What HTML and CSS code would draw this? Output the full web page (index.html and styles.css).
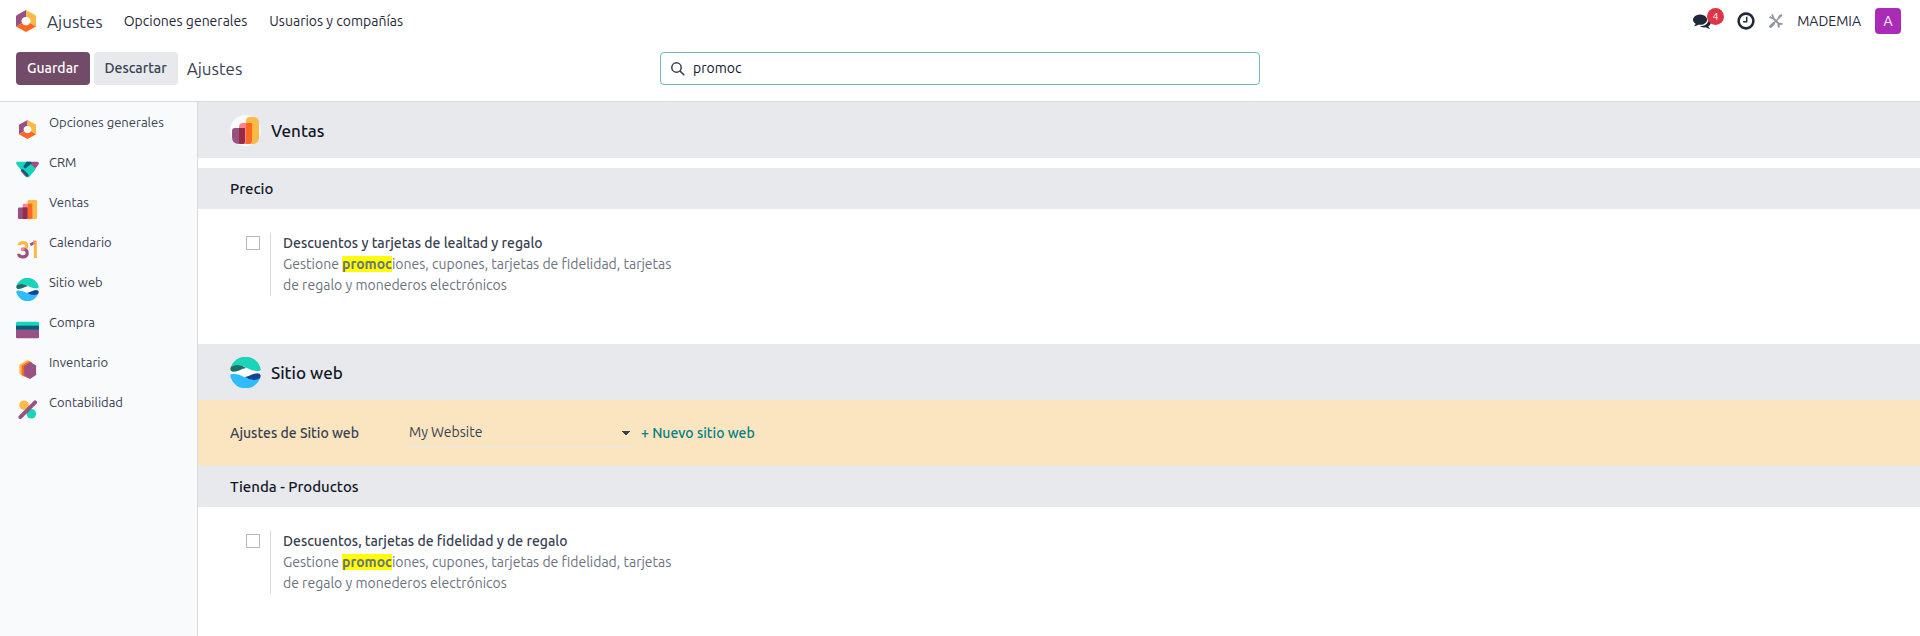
FILE: index.html
```html
<!DOCTYPE html>
<html lang="es">
<head>
    <meta charset="UTF-8">
    <meta name="viewport" content="width=device-width, initial-scale=1.0">
    <title>Ajustes</title>
    <link rel="stylesheet" href="styles.css">
</head>
<body>
    <!-- icons used more than once -->
    <svg class="defs" aria-hidden="true">
        <symbol id="ico-ajustes" viewBox="0 0 20 22">
            <path d="M10 0v7a4 4 0 0 0-4 6l-6 3.500V6.500q0-1 1-1.500z" fill="#985184"/>
            <path d="M10 0l9 5q1 .5 1 1.500v10L14 13a4 4 0 0 0-4-6z" fill="#fbb945"/>
            <path d="M0 16.500L6 13a4.500 4.500 0 0 0 8 0l6 3.500L10 22z" fill="#fc6722"/>
        </symbol>
        <symbol id="ico-web" viewBox="0 0 24 24">
            <circle cx="12" cy="12" r="11.500" fill="#fff"/>
            <path d="M.6 8A12 12 0 0 1 23.400 8q1.200 3-1.800 3-4 0-8.600-2.500Q8 5 .6 8z" fill="#1ad3bb"/>
            <path d="M.8 7.500Q7 4.500 12.500 8.500q-2 .3-5.500 1.900Q1 12.800 .3 9.800 .2 8.500 .8 7.500z" fill="#1a6f66"/>
            <path d="M23.400 16A12 12 0 0 1 .6 16q-1.200-3 1.800-3 4 0 8.600 2.500 5 3.500 12.400.5z" fill="#2ebcfa"/>
            <path d="M23.200 16.500q-6.200 3-11.700-1 2-.3 5.500-1.900 6-2.400 6.700.6.100 1.300-.5 2.300z" fill="#144496"/>
        </symbol>
    </svg>

    <header class="navbar">
        <a class="brand" href="#">
            <svg class="brand-icon"><use href="#ico-ajustes"/></svg>
            <span>Ajustes</span>
        </a>
        <nav class="menu">
            <a href="#">Opciones generales</a>
            <a href="#">Usuarios y compañías</a>
        </nav>
        <div class="systray">
            <button class="tray-btn chat" type="button" aria-label="Conversaciones">
                <svg width="18" height="18" viewBox="0 0 1792 1792" fill="#1f2937"><path d="M1408 768q0 139-94 257t-256.500 186.500-353.500 68.500q-86 0-176-16-124 88-278 128-36 9-86 16h-3q-11 0-20.500-8t-11.500-21q-1-3-1-6.500t.5-6.500 2-6l2.500-5 3.500-5.500 4-5 4.500-5 4-4.500q5-6 23-25t26-29.500 22.500-29 25-38.500 20.500-44q-124-72-195-177t-71-224q0-139 94-257t256.500-186.500 353.500-68.500 353.500 68.500 256.500 186.500 94 257zm384 256q0 120-71 224.500t-195 176.500q10 24 20.500 44t25 38.500 22.500 29 26 29.500 23 25q1 1 4 4.500t4.500 5 4 5 3.500 5.500l2.500 5 2 6 .5 6.500-1 6.500q-3 14-13 22t-22 7q-50-7-86-16-154-40-278-128-90 16-176 16-271 0-472-132 58 4 88 4 161 0 309-45t264-129q125-92 192-212t67-254q0-77-23-152 129 71 204 178t75 230z"/></svg>
                <span class="badge">4</span>
            </button>
            <button class="tray-btn" type="button" aria-label="Actividades">
                <svg width="18" height="18" viewBox="96 96 1600 1600" fill="#1f2937"><path d="M1024 544v448q0 14-9 23t-23 9h-320q-14 0-23-9t-9-23v-64q0-14 9-23t23-9h224v-352q0-14 9-23t23-9h64q14 0 23 9t9 23zm416 352q0-148-73-273t-198-198-273-73-273 73-198 198-73 273 73 273 198 198 273 73 273-73 198-198 73-273zm224 0q0 209-103 385.500t-279.500 279.500-385.500 103-385.500-103-279.500-279.500-103-385.500 103-385.500 279.500-279.500 385.500-103 385.500 103 279.500 279.500 103 385.500z"/></svg>
            </button>
            <button class="tray-btn" type="button" aria-label="Herramientas">
                <svg width="14" height="14" viewBox="0 0 14 14" fill="none" stroke="#8f939b">
                    <path d="M3.500 3.500l7.500 7.500" stroke-width="1.800"/>
                    <path d="M.5 2.800Q2.500 4.500 3.600 3.600T2.800 .5" stroke-width="1.800"/>
                    <path d="M10.200 13.500Q8.800 11 10 10t3.500.3" stroke-width="1.800"/>
                    <path d="M1.600 12.400l3-3" stroke-width="2.800" stroke-linecap="round"/>
                    <path d="M4.500 9.500l5-5" stroke-width="1.400"/>
                    <path d="M9.500 4.500l1.300-2.300 2.200-1.200" stroke-width="2.200"/>
                </svg>
            </button>
            <span class="company">MADEMIA</span>
            <button class="avatar" type="button">A</button>
        </div>
    </header>

    <div class="control-panel">
        <div class="actions">
            <button class="btn btn-primary" type="button">Guardar</button>
            <button class="btn btn-secondary" type="button">Descartar</button>
            <span class="page-name">Ajustes</span>
        </div>
        <label class="search">
            <svg width="14" height="14" viewBox="0 0 14 14" fill="none" stroke="#374151" stroke-width="1.500"><circle cx="5.500" cy="5.500" r="4.700"/><path d="M8.900 8.900l4.400 4.400"/></svg>
            <input type="text" value="promoc" aria-label="Buscar">
        </label>
    </div>

    <div class="settings">
        <aside class="sidebar">
            <a class="tab" href="#"><svg viewBox="0 0 24 24"><use href="#ico-ajustes" x="3" y="2" width="18" height="20"/></svg>Opciones generales</a>
            <a class="tab" href="#">
                <svg viewBox="0 0 24 24">
                    <path d="M11 4h11.500q2 .5 1 2.500L20 11.500q-1 1-2 0z" fill="#985184"/>
                    <path d="M1.500 4H12l7.500 6q1.500 1.500 0 3L14 19.500q-1.500 1.500-3 0L.8 7Q-.8 4.300 1.500 4z" fill="#1ad3bb"/>
                    <path d="M11 4h4.500l1 1.500-6 5q-1 .8-2.200-.2-1.300-1.300 0-2.600z" fill="#005e7a"/>
                    <path d="M5.200 12.200q1.500-1.200 2.800 0l4.800 4.800q.8 1-.2 2l-1 1-5.800-5.800q-1.200-1-.6-2z" fill="#005e7a"/>
                    <path d="M5 12.300l6.500 7.700q-2-.2-5.200-4.600Q4.600 13.500 5 12.300z" fill="#985184"/>
                </svg>CRM</a>
            <a class="tab" href="#">
                <svg viewBox="0 0 24 24">
                    <rect x="12" y="2" width="10" height="20" rx="1.500" fill="#fbb945"/>
                    <path d="M7 7.500q0-1.500 1.500-1.500H17v14.500q0 1.500-1.500 1.500H7z" fill="#fc868b"/>
                    <path d="M12.500 6H17v14.500q0 1.500-1.500 1.500h-3z" fill="#fc6722"/>
                    <path d="M2 11.500Q2 10 3.500 10H12v10.500q0 1.500-1.500 1.500h-7Q2 22 2 20.500z" fill="#985184"/>
                    <path d="M7 10h5v10.500q0 1.500-1.500 1.500H7z" fill="#962b48"/>
                </svg>Ventas</a>
            <a class="tab" href="#">
                <svg viewBox="0 0 24 24" fill="none" stroke-width="3.200">
                    <path d="M3.200 7.500Q4 4.800 7.300 4.800q4 0 4 3.200t-4 3.600" stroke="#fbb945"/>
                    <path d="M5.500 11.800h1.800q4.400.2 4.400 3.900 0 4-4.400 4T2.800 16.500" stroke="#985184"/>
                    <path d="M5.500 11.600h3.500" stroke="#fc868b" stroke-width="2.800"/>
                    <path d="M20.200 3.300V21" stroke="#fbb945"/>
                    <path d="M15 7.300l4-2.600" stroke="#985184" stroke-width="2.800"/>
                    <path d="M18.600 6.300V3.300h2.400" stroke="#fc868b" stroke-width="1.500"/>
                </svg>Calendario</a>
            <a class="tab" href="#"><svg viewBox="0 0 24 24"><use href="#ico-web" width="24" height="24"/></svg>Sitio web</a>
            <a class="tab" href="#">
                <svg viewBox="0 0 24 24">
                    <path d="M0 9h24v11q0 1-1 1H1q-1 0-1-1z" fill="#985184"/>
                    <path d="M0 5.500Q0 4 1.500 4h21Q24 4 24 5.500V9H0z" fill="#1ad3bb"/>
                    <path d="M0 8h24v4H0z" fill="#005e7a"/>
                </svg>Compra</a>
            <a class="tab" href="#">
                <svg viewBox="0 0 24 24">
                    <path d="M12 2l2 1v17l-2 1-8.500-4.500V7z" fill="#fbb945"/>
                    <path d="M14 3l3 2v15l-3 1.500L6 18V8z" fill="#fc6722"/>
                    <path d="M15 4.500l6 3.300v10L14.500 21.800 8.500 18V8.500z" fill="#985184"/>
                </svg>Inventario</a>
            <a class="tab" href="#">
                <svg viewBox="0 0 24 24">
                    <circle cx="8.500" cy="7.500" r="5" fill="#fbb945"/>
                    <circle cx="16" cy="16.500" r="5" fill="#1ad3bb"/>
                    <path d="M4.500 20L20 4.500" stroke="#985184" stroke-width="4" stroke-linecap="round"/>
                </svg>Contabilidad</a>
        </aside>

        <main class="content">
            <section class="app">
                <h2 class="app-title">
                    <svg viewBox="0 0 31 31">
                        <circle cx="15.500" cy="15.500" r="15.500" fill="#f9fafb"/>
                        <path d="M16 6q0-4 4-4h3q6 0 6 6v14q0 7-7 7h-6z" fill="#fbb945"/>
                        <path d="M9 12q0-4 4-4h9v17q0 4-4 4H9z" fill="#fc868b"/>
                        <path d="M16 8h6v17q0 4-4 4h-2z" fill="#fc6722"/>
                        <path d="M2 16q0-3 3-3h10v13q0 3-3 3H9q-7 0-7-7z" fill="#985184"/>
                        <path d="M9 13h6v13q0 3-3 3-2 0-3-1z" fill="#962b48"/>
                    </svg>
                    Ventas
                </h2>
                <h3 class="block-title spaced">Precio</h3>
                <div class="setting">
                    <input type="checkbox" id="lealtad">
                    <div class="setting-text">
                        <label for="lealtad">Descuentos y tarjetas de lealtad y regalo</label>
                        <p>Gestione <mark>promoc</mark>iones, cupones, tarjetas de fidelidad, tarjetas <br>de regalo y monederos electrónicos</p>
                    </div>
                </div>
            </section>

            <section class="app">
                <h2 class="app-title">
                    <svg viewBox="0 0 30 30"><use href="#ico-web" width="30" height="30"/></svg>
                    Sitio web
                </h2>
                <div class="site-row">
                    <label for="website">Ajustes de Sitio web</label>
                    <select id="website">
                        <option>My Website</option>
                    </select>
                    <a href="#">+ Nuevo sitio web</a>
                </div>
                <h3 class="block-title">Tienda - Productos</h3>
                <div class="setting">
                    <input type="checkbox" id="fidelidad">
                    <div class="setting-text">
                        <label for="fidelidad">Descuentos, tarjetas de fidelidad y de regalo</label>
                        <p>Gestione <mark>promoc</mark>iones, cupones, tarjetas de fidelidad, tarjetas <br>de regalo y monederos electrónicos</p>
                    </div>
                </div>
            </section>
        </main>
    </div>
</body>
</html>
```

FILE: styles.css
```css
*{ box-sizing: border-box; margin: 0; padding: 0;}
body{ display: flex; flex-direction: column; height: 100vh; overflow: hidden; background: #fff; color: #374151; font-family: Ubuntu, "Noto Sans", sans-serif; font-size: 14px; line-height: 21px;}
a{ color: inherit; text-decoration: none;}
button, input, select{ font: inherit; color: inherit; border: 0; background: none;}
.defs{ display: none;}

/* navbar */
.navbar{ display: flex; align-items: center; height: 42px; padding: 0 19px 0 16px; flex-shrink: 0; color: #1f2937;}
.brand{ display: flex; align-items: center; gap: 11px; font-size: 17px; color: #374151;}
.brand-icon{ width: 20px; height: 22px;}
.menu{ display: flex; gap: 22px; margin-left: 21px;}
.systray{ display: flex; align-items: center; gap: 14px; margin-left: auto;}
.tray-btn{ display: flex; position: relative;}
.chat{ margin-right: 12px;}
.badge{ position: absolute; left: 14px; top: -4px; width: 17px; height: 17px; border-radius: 50%; background: #dc3545; color: #fff; font-size: 10px; line-height: 17px; text-align: center;}
.avatar{ width: 26px; height: 26px; border-radius: 4px; background: #a92bb6; color: #fff;}

/* control panel */
.control-panel{ display: grid; grid-template-columns: 1fr 600px 1fr; align-items: start; height: 60px; padding: 10px 16px 0; border-bottom: 1px solid #d8dadd; flex-shrink: 0;}
.actions{ display: flex; align-items: center; gap: 4px;}
.btn{ height: 33px; padding: 0 11px; border-radius: 4px; font-weight: 500;}
.btn-primary{ background: #714b67; color: #fff;}
.btn-secondary{ background: #e7e9ed;}
.page-name{ margin-left: 5px; font-size: 17px;}
.search{ display: flex; align-items: center; gap: 8px; height: 33px; padding: 0 10px; border: 1px solid #71b5b9; border-radius: 4px;}
.search input{ flex: 1; outline: 0; color: #111827;}

/* settings */
.settings{ display: flex; flex: 1; min-height: 0;}
.sidebar{ width: 198px; flex-shrink: 0; background: #f9fafb; border-right: 1px solid #d8dadd;}
.tab{ display: flex; align-items: center; gap: 10px; height: 40px; padding-left: 16px; font-size: 13px;}
.tab svg{ width: 23px; height: 23px; margin-top: 14px;}
.content{ flex: 1; overflow: hidden;}
.app-title{ display: flex; align-items: center; gap: 10px; height: 56px; padding-left: 32px; background: #e7e9ed; color: #111827; font-size: 17px; font-weight: 500;}
.app-title svg{ width: 31px; height: 31px;}
.block-title{ padding: 10px 32px; background: #e7e9ed; color: #111827; font-size: 15px; font-weight: 500;}
.spaced{ margin-top: 10px;}
.setting{ display: flex; gap: 10px; padding: 24px 48px 48px;}
.setting input{ appearance: none; width: 14px; height: 14px; margin-top: 3px; border: 1px solid #b5b7ba;}
.setting-text{ padding-left: 12px; border-left: 1px solid #d8dadd;}
.setting-text label{ display: block; font-weight: 500;}
.setting-text p{ color: #6b7280;}
mark{ background: #ff0; color: inherit; font-weight: 700;}
.site-row{ display: flex; align-items: center; height: 66px; padding-left: 32px; background: #fae5c0;}
.site-row label{ width: 179px; font-weight: 500;}
.site-row select{ appearance: none; width: 223px; height: 29px; border-bottom: 1px solid #e7e9ed; background: conic-gradient(from -45deg at 50% 100%, #374151 90deg, transparent 0) no-repeat right 2px center / 8px 4px;}
.site-row a{ margin-left: 9px; color: #017e84; font-weight: 500;}
```
